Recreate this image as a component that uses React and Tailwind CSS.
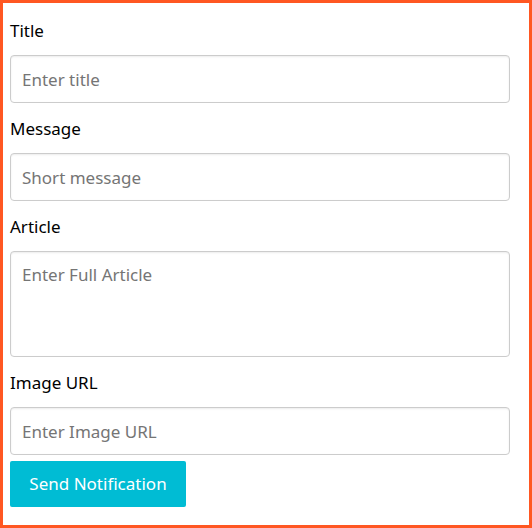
export default function App() {
  const field =
    "block w-[500px] rounded border border-[#cccccc] bg-white px-[11px] text-[17px] text-[#495057] placeholder:text-[#757575] shadow-[inset_0_1px_2px_rgba(0,0,0,0.08)] outline-none";
  const label = "block text-[17px] leading-[24px] text-black mb-3";

  return (
    <div
      className="h-[528px] w-[532px] border-[3px] border-[#ff5722] bg-white pl-[7px] pt-4"
      style={{ fontFamily: "'Noto Sans', 'DejaVu Sans', sans-serif" }}
    >
      <div className="mb-[14px]">
        <label className={label}>Title</label>
        <input className={`${field} h-[48px]`} placeholder="Enter title" />
      </div>
      <div className="mb-[14px]">
        <label className={label}>Message</label>
        <input className={`${field} h-[48px]`} placeholder="Short message" />
      </div>
      <div className="mb-[14px]">
        <label className={label}>Article</label>
        <textarea
          className={`${field} h-[106px] resize-none py-[11px] leading-[24px]`}
          placeholder="Enter Full Article"
        />
      </div>
      <div className="mb-[6px]">
        <label className={label}>Image URL</label>
        <input className={`${field} h-[48px]`} placeholder="Enter Image URL" />
      </div>
      <button className="h-[46px] w-[176px] rounded-[2px] bg-[#00bcd4] text-[17px] text-white">
        Send Notification
      </button>
    </div>
  );
}
